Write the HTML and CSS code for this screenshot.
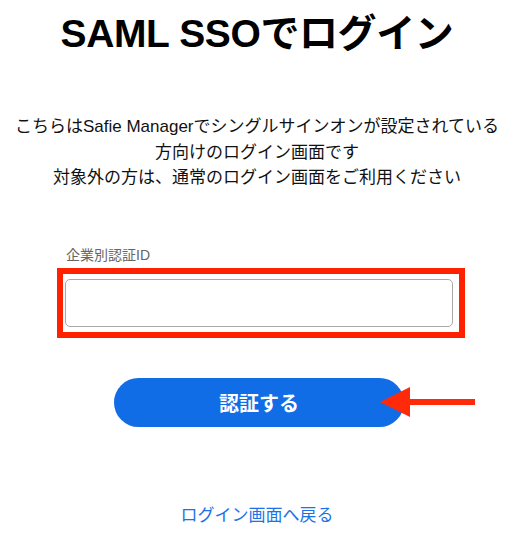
FILE: index.html
```html
<!DOCTYPE html>
<html lang="ja">
<head>
<meta charset="utf-8">
<title>SAML SSOでログイン</title>
<link rel="stylesheet" href="styles.css">
</head>
<body>
<main class="page">
  <h1 class="title">SAML SSOでログイン</h1>
  <p class="desc">こちらはSafie Managerでシングルサインオンが設定されている<br>方向けのログイン画面です<br>対象外の方は、通常のログイン画面をご利用ください</p>
  <div class="field">
    <label class="label" for="cid">企業別認証ID</label>
    <div class="highlight">
      <input class="input" id="cid" type="text">
    </div>
  </div>
  <div class="btn-row">
    <button class="btn" type="button">認証する</button>
    <svg class="arrow" width="100" height="34" viewBox="0 0 100 34" aria-hidden="true">
      <polygon points="0,17 30,2 30,32" fill="#ff2a0a"/>
      <rect x="28" y="14" width="67" height="6" fill="#ff2a0a"/>
    </svg>
  </div>
  <a class="back" href="#">ログイン画面へ戻る</a>
</main>
</body>
</html>
```
FILE: styles.css
```css
* { box-sizing: border-box; }
html, body { margin: 0; padding: 0; background: #fff; }
body {
  font-family: "Liberation Sans", "Noto Sans CJK JP", sans-serif;
  color: #111;
}
.page {
  width: 514px;
  display: flex;
  flex-direction: column;
  align-items: center;
  padding-top: 10px;
}
.title {
  margin: 0;
  font-size: 39px;
  line-height: 48px;
  font-weight: 700;
  color: #000;
  letter-spacing: -0.4px;
}
.desc {
  margin: 56px 0 0;
  font-size: 17px;
  line-height: 25.5px;
  text-align: center;
  color: #111;
}
.field {
  margin-top: 55px;
  display: flex;
  flex-direction: column;
  width: 408px;
  margin-left: 8px;
}
.label {
  font-size: 14px;
  line-height: 18px;
  color: #666;
  padding-left: 9px;
  margin-bottom: 4px;
}
.highlight {
  border: 6px solid #ff2200;
  padding: 5px 6px 5px 2px;
}
.input {
  display: block;
  width: 100%;
  height: 48px;
  border: 1px solid #a9a9a9;
  border-radius: 5px;
  background: #fff;
  font-size: 16px;
  padding: 0 10px;
  outline: none;
}
.btn-row {
  position: relative;
  margin-top: 40px;
  width: 290px;
  margin-left: 4px;
}
.btn {
  display: block;
  width: 290px;
  height: 49px;
  border: none;
  border-radius: 25px;
  background: #116de6;
  color: #fff;
  font-family: "Liberation Sans", "Noto Sans CJK JP", sans-serif;
  font-size: 20px;
  font-weight: 700;
  cursor: pointer;
}
.arrow {
  position: absolute;
  left: 266px;
  top: 7px;
}
.back {
  margin-top: 78px;
  font-size: 17px;
  line-height: 22px;
  color: #1a73e8;
  text-decoration: none;
}
```
